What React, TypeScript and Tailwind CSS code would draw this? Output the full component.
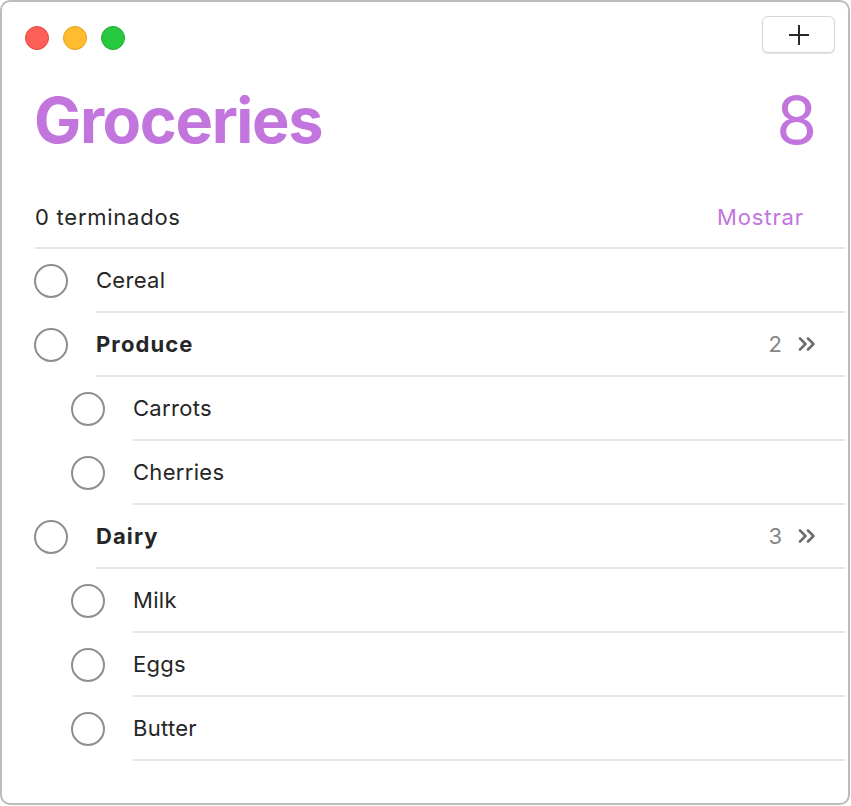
type Item = { name: string; depth: number; group?: boolean; count?: number };

const items: Item[] = [
  { name: 'Cereal', depth: 0 },
  { name: 'Produce', depth: 0, group: true, count: 2 },
  { name: 'Carrots', depth: 1 },
  { name: 'Cherries', depth: 1 },
  { name: 'Dairy', depth: 0, group: true, count: 3 },
  { name: 'Milk', depth: 1 },
  { name: 'Eggs', depth: 1 },
  { name: 'Butter', depth: 1 },
];

function Chevrons() {
  return (
    <svg width="18" height="14" viewBox="0 0 18 14" fill="none">
      <path d="M2 1.5l5.5 5.5L2 12.5M10 1.5l5.5 5.5-5.5 5.5" stroke="#6e6e6e" strokeWidth="2.6" strokeLinecap="round" strokeLinejoin="round" />
    </svg>
  );
}

export default function App() {
  return (
    <div className="w-[851px] h-[806px] bg-white" style={{ fontFamily: 'Inter, "Liberation Sans", sans-serif' }}>
      <div className="w-[850px] h-[805px] rounded-[10px] border-2 border-[#bcbcbc] bg-white">
        {/* Titlebar */}
        <div className="flex items-start justify-between pl-[23px] pr-[13px] pt-[14px] h-[54px]">
          <div className="flex items-center gap-[14px] mt-[10px]">
            <span className="w-[24px] h-[24px] rounded-full bg-[#fe5f57] border border-[#e4473f]" />
            <span className="w-[24px] h-[24px] rounded-full bg-[#febc2e] border border-[#e1a11d]" />
            <span className="w-[24px] h-[24px] rounded-full bg-[#28c840] border border-[#1eae31]" />
          </div>
          <button className="w-[73px] h-[37px] rounded-[6px] border border-[#d6d6d6] bg-white shadow-[0_1px_1px_rgba(0,0,0,0.12)] flex items-center justify-center">
            <svg width="22" height="22" viewBox="0 0 22 22">
              <path d="M11 1v20M1 11h20" stroke="#2a2a2a" strokeWidth="2" />
            </svg>
          </button>
        </div>

        {/* Header */}
        <div className="flex items-center justify-between pl-[32px] pr-[31px] mt-[22px] h-[84px]">
          <h1 className="text-[63px] font-bold tracking-[-1.4px] text-[#c275dd] leading-none">Groceries</h1>
          <span className="text-[66px] font-normal text-[#c275dd] leading-none">8</span>
        </div>

        <div className="ml-[33px] mr-[3px] mt-[25px] flex items-center justify-between h-[62px] border-b-2 border-[#e6e6e6]">
          <span className="text-[22px] tracking-[0.75px] text-[#262626]">0 terminados</span>
          <span className="text-[22px] tracking-[0.9px] text-[#c275dd] mr-[41px]">Mostrar</span>
        </div>

        {/* Items */}
        <div className="mr-[3px]">
          {items.map((it) => (
            <div
              key={it.name}
              className={`flex items-stretch h-[64px] ${it.depth === 0 ? 'pl-[32px]' : 'pl-[69px]'}`}
            >
              <div className="w-[62px] flex items-center">
                <span className="w-[34px] h-[34px] rounded-full border-2 border-[#8e8e8e]" />
              </div>
              <div className="flex-1 flex items-center justify-between border-b-2 border-[#e6e6e6] pr-[29px]">
                <span
                  className={`text-[22px] text-[#262626] ${it.group ? 'font-bold tracking-[1.1px]' : 'tracking-[0.3px]'}`}
                >
                  {it.name}
                </span>
                {it.group && (
                  <span className="flex items-center gap-[16px] text-[22px] text-[#858585]">
                    {it.count}
                    <Chevrons />
                  </span>
                )}
              </div>
            </div>
          ))}
        </div>
      </div>
    </div>
  );
}
